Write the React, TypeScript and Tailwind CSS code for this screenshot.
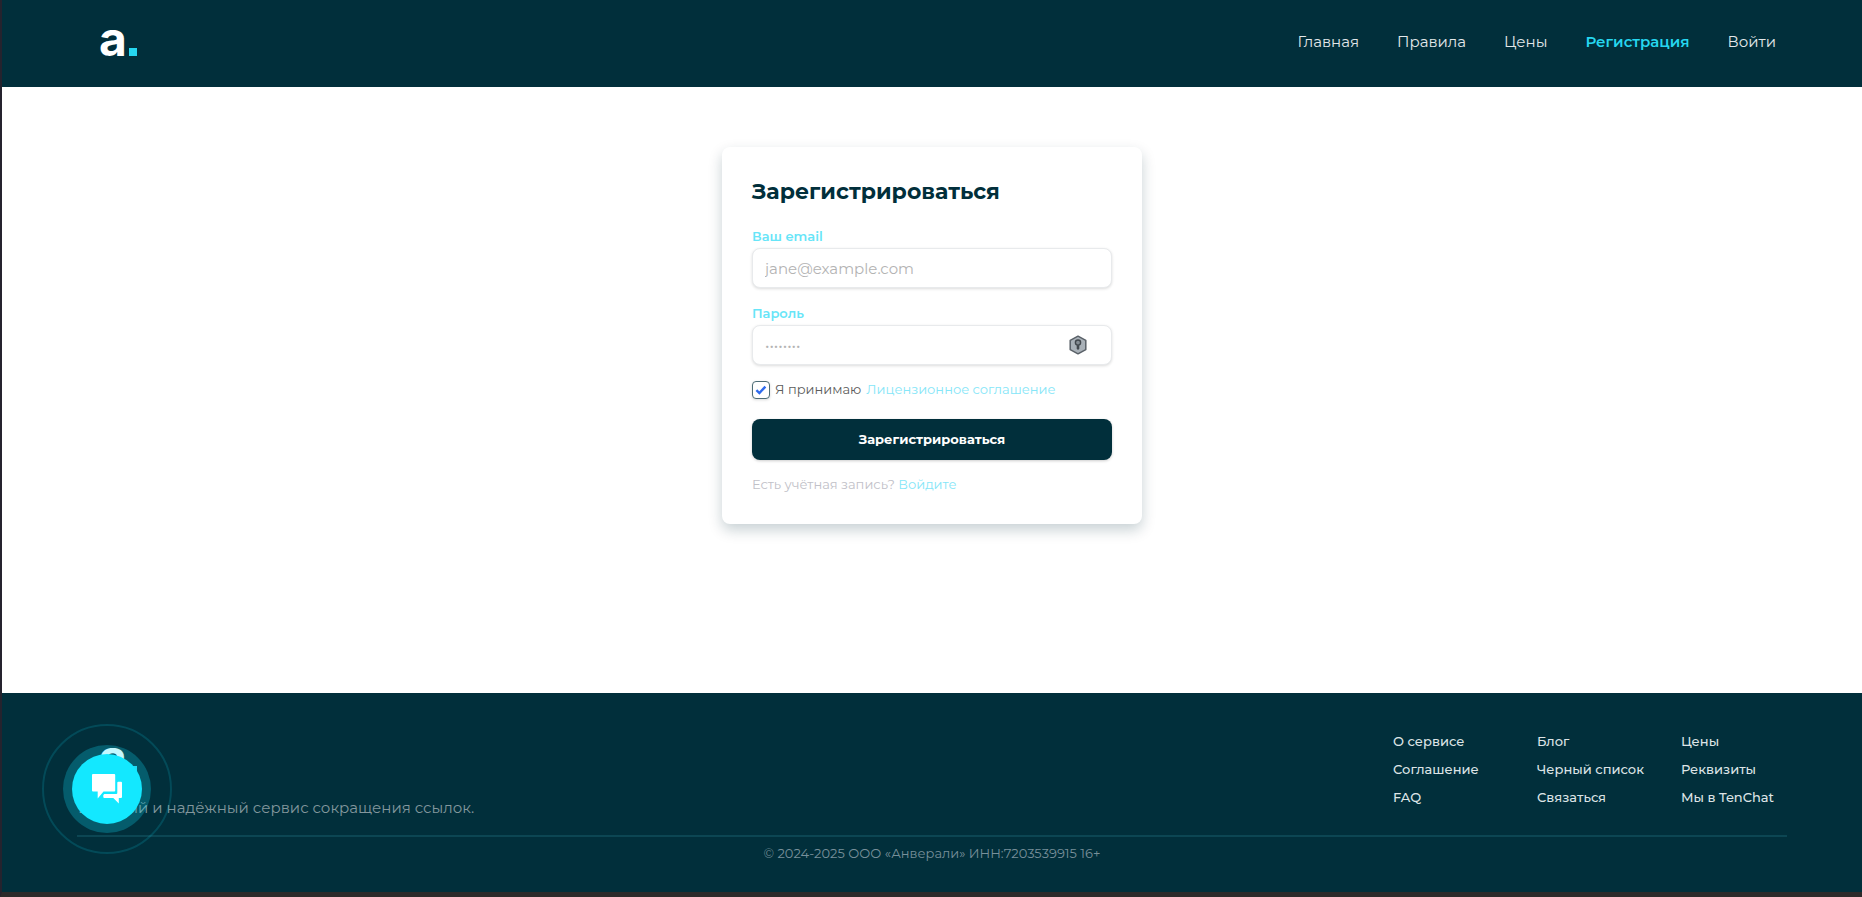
import { useState } from 'react';

const NAV_LINKS = [
    { label: 'Главная', href: '#home' },
    { label: 'Правила', href: '#rules' },
    { label: 'Цены', href: '#prices' },
    { label: 'Регистрация', href: '#register', active: true },
    { label: 'Войти', href: '#login' },
];

const FOOTER_COLUMNS = [
    ['О сервисе', 'Соглашение', 'FAQ'],
    ['Блог', 'Черный список', 'Связаться'],
    ['Цены', 'Реквизиты', 'Мы в TenChat'],
];

const inputClass =
    'block w-full h-10 rounded-lg border border-[#e8eaec] bg-white px-3 text-[15px] text-[#012f3b] placeholder:text-[#b3b3b3] shadow-[0_1px_3px_rgba(0,0,0,0.14)] outline-none';

const Logo = () => (
    <a href="#home" className="flex items-baseline gap-0.5 font-[Inter,sans-serif] text-5xl leading-12 font-bold text-white">
        a<span className="size-2 bg-[#26d7f0]" />
    </a>
);

const Header = () => (
    <header className="flex h-[87px] items-start justify-between bg-[#012f3b] pl-24 pr-[86px]">
        <div className="pt-[15px] pl-px">
            <Logo />
        </div>
        <nav className="flex gap-[38px] pt-[30px] text-[15px] leading-6 text-[#e3e8ea]">
            {NAV_LINKS.map((link) => (
                <a key={link.label} href={link.href} className={link.active ? 'font-semibold text-[#26d7f0]' : ''}>
                    {link.label}
                </a>
            ))}
        </nav>
    </header>
);

const PasswordManagerIcon = () => (
    <svg viewBox="0 0 18 20" className="absolute right-[25px] top-[10px] h-5 w-[18px]" aria-hidden="true">
        <path d="M9 1.2 16.8 5.4v9.2L9 18.8 1.2 14.6V5.4z" fill="#a9b1b8" stroke="#596067" strokeWidth="1.5" strokeLinejoin="round" />
        <circle cx="9" cy="7.6" r="2.6" fill="#858d94" stroke="#42484e" strokeWidth="1.4" />
        <path d="M7.7 10.2v3.6L9 15l1.3-1.2v-3.6z" fill="#42484e" />
    </svg>
);

const ChatIcon = () => (
    <svg viewBox="0 0 30 30" className="size-[30px]" fill="currentColor" aria-hidden="true">
        <path d="M1 0h21.2a1 1 0 0 1 1 1v15.5a1 1 0 0 1-1 1H11.5L5.7 24.5v-7H1a1 1 0 0 1-1-1V1a1 1 0 0 1 1-1z" />
        <path d="M26.3 7.8H29a1 1 0 0 1 1 1V23a1 1 0 0 1-1 1h-2.2v5.6L21.3 24h-9a1 1 0 0 1-1-1v-2l1-1h12a1 1 0 0 0 1-1V8.8a1 1 0 0 1 1-1z" />
    </svg>
);

const RegisterForm = () => {
    const [accepted, setAccepted] = useState(true);

    return (
        <form
            onSubmit={(e) => e.preventDefault()}
            className="w-full max-w-[420px] rounded-lg bg-white p-[30px] shadow-[0_6px_14px_rgba(1,47,59,0.22)]"
        >
            <h1 className="mb-5 text-[22px] leading-[30px] font-bold text-[#012f3b]">Зарегистрироваться</h1>

            <label htmlFor="email" className="mb-[3px] block text-[13px] leading-[18px] font-semibold text-[#67e5f8]">Ваш email</label>
            <input id="email" type="email" placeholder="jane@example.com" className={inputClass} />

            <label htmlFor="password" className="mt-4 mb-[3px] block text-[13px] leading-[18px] font-semibold text-[#67e5f8]">Пароль</label>
            <div className="relative">
                <input id="password" type="password" placeholder="••••••••" className={inputClass} />
                <PasswordManagerIcon />
            </div>

            <div className="mt-4 flex h-[18px] items-center gap-[5px] text-[13px]">
                <span className="relative block size-[18px]">
                    <input
                        id="accept"
                        type="checkbox"
                        checked={accepted}
                        onChange={(e) => setAccepted(e.target.checked)}
                        className="block size-[18px] appearance-none rounded border border-[#4d6d76] bg-white shadow-[0_1px_3px_rgba(0,0,0,0.15)]"
                    />
                    {accepted && (
                        <svg viewBox="0 0 18 18" className="pointer-events-none absolute inset-0" aria-hidden="true">
                            <path d="M4.4 9.1 7.4 12 13.4 5.6" fill="none" stroke="#2f6bed" strokeWidth="2.4" />
                        </svg>
                    )}
                </span>
                <label htmlFor="accept" className="text-[#5c5c5c]">Я принимаю</label>
                <a href="#license" className="text-[#86e6f8]">Лицензионное соглашение</a>
            </div>

            <button type="submit" className="mt-5 block h-[41px] w-full rounded-lg bg-[#012f3b] text-[13px] font-bold text-white shadow-[0_1px_3px_rgba(0,0,0,0.2)]">
                Зарегистрироваться
            </button>

            <p className="mt-3.5 text-[13px] leading-5 text-[#c1c1c8]">
                Есть учётная запись? <a href="#login" className="text-[#86e6f8]">Войдите</a>
            </p>
        </form>
    );
};

const Footer = () => (
    <footer className="bg-[#012f3b] px-[75px] pt-[34px] pb-[29px]">
        <div className="flex justify-between border-b-2 border-[#0c4653] pb-[15px]">
            <div className="flex flex-col justify-between pt-1.5 pl-px">
                <div className="pl-[21px]">
                    <Logo />
                </div>
                <p className="text-[15px] leading-6 text-[#83979d]">Быстрый и надёжный сервис сокращения ссылок.</p>
            </div>
            <div className="grid grid-cols-[144px_144px_106px] pb-[9px] text-[13px] leading-7 font-medium text-[#dde4e6]">
                {FOOTER_COLUMNS.map((column) => (
                    <ul key={column[0]}>
                        {column.map((item) => (
                            <li key={item} className="whitespace-nowrap">
                                <a href="#footer">{item}</a>
                            </li>
                        ))}
                    </ul>
                ))}
            </div>
        </div>
        <p className="pt-1.5 text-center text-[13px] leading-5 text-[#78909a]">© 2024-2025 ООО «Анверали» ИНН:7203539915 16+</p>
    </footer>
);

// Floating support button with its pulse rings
const ChatWidget = () => (
    <div className="fixed bottom-[43px] left-[42px] flex size-[130px] items-center justify-center rounded-full border-2 border-[#13e5ff]/15">
        <div className="flex size-[88px] items-center justify-center rounded-full bg-[#13e5ff]/25">
            <button type="button" aria-label="Чат" className="flex size-[70px] items-center justify-center rounded-full bg-[#13e8ff] text-white">
                <ChatIcon />
            </button>
        </div>
    </div>
);

export default function App() {
    return (
        <div className="flex min-h-screen flex-col border-b-5 border-l-2 border-b-[#2d2a2a] border-l-[#25232e] bg-white font-[Montserrat,Inter,sans-serif]">
            <Header />
            <main className="flex flex-1 items-start justify-center px-4 pt-[60px] pb-10">
                <RegisterForm />
            </main>
            <Footer />
            <ChatWidget />
        </div>
    );
}
